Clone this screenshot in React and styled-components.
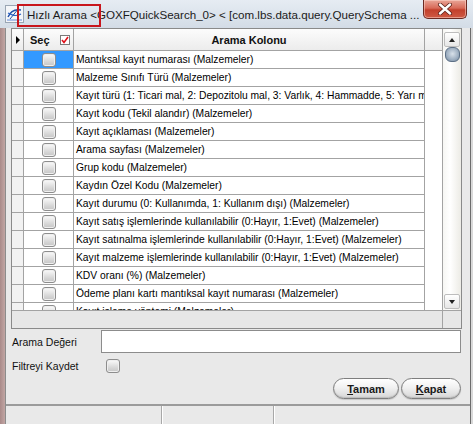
import React from "react"
import styled, { createGlobalStyle } from "styled-components"

const GlobalStyle = createGlobalStyle`
  html, body {
    margin: 0;
    padding: 0;
    background: #e9e9e9;
  }
  * {
    box-sizing: border-box;
  }
`

const Window = styled.div`
  width: 473px;
  height: 424px;
  display: flex;
  flex-direction: column;
  overflow: hidden;
  font-family: "Liberation Sans", Arial, sans-serif;
  color: #111;
`

const TitleBar = styled.div`
  height: 28px;
  flex: none;
  position: relative;
  display: flex;
  align-items: center;
  padding-left: 5px;
  background: linear-gradient(#e6ecf3, #d3dce6);
`

const TitleText = styled.div`
  margin-left: 3px;
  font-size: 11.6px;
  white-space: nowrap;
  color: #1b1b1b;
`

const Annotation = styled.div`
  position: absolute;
  left: 17px;
  top: 4px;
  width: 84px;
  height: 23px;
  border: 2px solid #c8161d;
`

const CloseButton = styled.div`
  position: absolute;
  right: 6px;
  top: 0;
  width: 44px;
  height: 19px;
  display: flex;
  align-items: center;
  justify-content: center;
  border: 1px solid #6b2a22;
  border-top: none;
  border-radius: 0 0 5px 5px;
  background: linear-gradient(#e9a698 0%, #d86a58 45%, #c2402c 55%, #cf5a44 100%);
  box-shadow: inset 0 0 0 1px rgba(255, 220, 210, 0.5);
`

const Frame = styled.div`
  flex: 1;
  display: flex;
  min-height: 0;
`

const LeftEdge = styled.div`
  width: 6px;
  flex: none;
  background: linear-gradient(90deg, #a98a89, #c2a6a4);
  border-right: 1px solid #8c8c8c;
`

const RightEdge = styled.div`
  width: 3px;
  flex: none;
  background: #d9d9d9;
  border-left: 1px solid #6c6c6c;
`

const Client = styled.div`
  flex: 1;
  display: flex;
  flex-direction: column;
  background: #e9e9e9;
  min-width: 0;
`

const Grid = styled.div`
  margin: 0 8px 0 5px;
  height: 301px;
  flex: none;
  border: 1px solid #8a8a8a;
  display: flex;
  flex-direction: column;
  background: #fff;
`

const GridTop = styled.div`
  height: 281px;
  display: flex;
`

const Columns = styled.div`
  flex: 1;
  display: flex;
  flex-direction: column;
  min-width: 0;
`

const HeaderRow = styled.div`
  height: 22px;
  flex: none;
  display: flex;
  border-bottom: 1px solid #a3a3a3;
  background: linear-gradient(#fcfcfc, #ececec);
`

const Cell = styled.div`
  width: ${p => p.w}px;
  flex: none;
  height: 100%;
  display: flex;
  align-items: center;
  justify-content: ${p => (p.center ? "center" : "flex-start")};
  border-right: ${p => (p.last ? "none" : "1px solid #a3a3a3")};
  overflow: hidden;
  white-space: nowrap;
`

const HeaderLabel = styled.span`
  font-weight: bold;
  font-size: 11px;
  color: #111;
  margin-left: ${p => p.ml || 0}px;
`

const Triangle = styled.div`
  width: 0;
  height: 0;
  margin-left: 4px;
  border-top: 4px solid transparent;
  border-bottom: 4px solid transparent;
  border-left: 4px solid #000;
`

const HeaderCheck = styled.div`
  width: 10px;
  height: 10px;
  margin-left: 10px;
  border: 1px solid #7a7a7a;
  background: #fff;
  display: flex;
  align-items: center;
  justify-content: center;
`

const Rows = styled.div`
  flex: 1;
  overflow: hidden;
`

const Row = styled.div`
  height: 18px;
  width: 413px;
  display: flex;
  border-bottom: 1px solid #a3a3a3;
`

const IndicatorCell = styled(Cell)`
  background: #f2f2f2;
`

const CheckCell = styled(Cell)`
  background: ${p => (p.selected ? "#3399ff" : "#fff")};
`

const TextCell = styled(Cell)`
  padding-left: 2px;
  font-size: 10.3px;
  color: #000;
`

const Checkbox = styled.div`
  width: 14px;
  height: 14px;
  flex: none;
  border: 1px solid #8d8d8d;
  border-radius: 3px;
  background: linear-gradient(#fbfbfb, #d4d4d4 70%, #c6c6c6);
  box-shadow: inset 0 0 0 1px #efefef;
`

const Scrollbar = styled.div`
  width: 19px;
  flex: none;
  border-left: 1px solid #a3a3a3;
  display: flex;
  flex-direction: column;
  align-items: center;
  padding: 3px 0 1px;
  background: linear-gradient(90deg, #f6f6f3, #ffffff 40%, #ecebe5);
`

const ScrollButton = styled.div`
  width: 16px;
  height: 15px;
  flex: none;
  border: 1px solid #bdbdbd;
  border-radius: 2px;
  background: linear-gradient(#ffffff, #e6e6e6);
  display: flex;
  align-items: center;
  justify-content: center;
`

const Arrow = styled.div`
  width: 0;
  height: 0;
  border-left: 3.5px solid transparent;
  border-right: 3.5px solid transparent;
  ${p => (p.down ? "border-top: 4px solid #222;" : "border-bottom: 4px solid #222;")}
`

const Thumb = styled.div`
  width: 15px;
  height: 15px;
  flex: none;
  border-radius: 6px;
  border: 1px solid #5d7086;
  background: radial-gradient(circle at 50% 45%, #d9e1ea, #9eafc1 60%, #6f8399);
`

const Track = styled.div`
  flex: 1;
`

const GridBottom = styled.div`
  height: 18px;
  flex: none;
  display: flex;
  border-top: 1px solid #a3a3a3;
  background: #e7e7e7;
`

const Corner = styled.div`
  width: 19px;
  margin-left: auto;
  border-left: 1px solid #a3a3a3;
`

const FormRow = styled.div`
  display: flex;
  align-items: center;
  height: ${p => p.h}px;
  margin-top: ${p => p.mt}px;
  padding-left: 6px;
  flex: none;
`

const Label = styled.div`
  width: ${p => p.w}px;
  flex: none;
  font-size: 10.5px;
  color: #111;
`

const Input = styled.div`
  width: 360px;
  height: 23px;
  border: 1px solid #8c8c8c;
  background: #fff;
`

const ButtonRow = styled.div`
  height: 21px;
  margin-top: 5px;
  margin-right: 9px;
  display: flex;
  justify-content: flex-end;
  gap: 2px;
  flex: none;
`

const PillButton = styled.div`
  width: ${p => p.w}px;
  height: 21px;
  border: 1px solid #7e7e7e;
  border-radius: 11px;
  background: linear-gradient(#ffffff, #f1f1f1 45%, #d6d6d6);
  box-shadow: inset 0 -1px 1px #bdbdbd, 0 1px 1px rgba(0, 0, 0, 0.15);
  display: flex;
  align-items: center;
  justify-content: center;
  font-size: 11px;
  font-weight: bold;
  color: #1a1a1a;

  u {
    text-decoration: underline;
  }
`

const StatusBar = styled.div`
  margin-top: auto;
  height: 20px;
  flex: none;
  display: flex;
  border-top: 2px solid #9b9b9b;
  background: #e9e9e9;
`

const StatusPanel = styled.div`
  width: ${p => (p.w ? p.w + "px" : "auto")};
  flex: ${p => (p.w ? "none" : "1")};
  border-right: ${p => (p.last ? "none" : "1px solid #a8a8a8")};
  box-shadow: ${p => (p.last ? "none" : "1px 0 0 #ffffff")};
  margin-right: ${p => (p.last ? 0 : 2)}px;
`

const rows = [
  "Mantıksal kayıt numarası (Malzemeler)",
  "Malzeme Sınıfı Türü (Malzemeler)",
  "Kayıt türü (1: Ticari mal, 2: Depozitolu mal, 3: Varlık, 4: Hammadde, 5: Yarı mamul, 6: Mamul)",
  "Kayıt kodu (Tekil alandır) (Malzemeler)",
  "Kayıt açıklaması (Malzemeler)",
  "Arama sayfası (Malzemeler)",
  "Grup kodu (Malzemeler)",
  "Kaydın Özel Kodu (Malzemeler)",
  "Kayıt durumu (0: Kullanımda, 1: Kullanım dışı) (Malzemeler)",
  "Kayıt satış işlemlerinde kullanılabilir (0:Hayır, 1:Evet) (Malzemeler)",
  "Kayıt satınalma işlemlerinde kullanılabilir (0:Hayır, 1:Evet) (Malzemeler)",
  "Kayıt malzeme işlemlerinde kullanılabilir (0:Hayır, 1:Evet) (Malzemeler)",
  "KDV oranı (%) (Malzemeler)",
  "Ödeme planı kartı mantıksal kayıt numarası (Malzemeler)",
  "Kayıt işleme yöntemi (Malzemeler)"
]

const AppIcon = () => (
  <svg width="19" height="18" viewBox="0 0 19 18">
    <rect x="0.5" y="0.5" width="18" height="17" fill="#f4f6f9" stroke="#9aa6b4" />
    <path d="M3 12 C6 5, 11 4, 16 5" stroke="#1f4fa8" strokeWidth="1.4" fill="none" />
    <path d="M3 8 C7 10, 11 12, 16 9" stroke="#2a62c4" strokeWidth="1.2" fill="none" />
    <path d="M5 14 L14 3" stroke="#1f4fa8" strokeWidth="1" fill="none" />
    <path d="M2 15 H17" stroke="#3b6fd0" strokeWidth="0.8" />
  </svg>
)

const CloseGlyph = () => (
  <svg width="16" height="12" viewBox="0 0 16 12">
    <path d="M3 1.5 L13 10.5 M13 1.5 L3 10.5" stroke="#5a2018" strokeWidth="4" strokeLinecap="round" />
    <path d="M3 1.5 L13 10.5 M13 1.5 L3 10.5" stroke="#ffffff" strokeWidth="2.4" strokeLinecap="round" />
  </svg>
)

const RedCheck = () => (
  <svg width="8" height="8" viewBox="0 0 8 8">
    <path d="M1 4 L3 6.5 L7 1" stroke="#e0101a" strokeWidth="1.6" fill="none" />
  </svg>
)

const App = () => {
  return (
    <Window>
      <GlobalStyle />
      <TitleBar>
        <AppIcon />
        <TitleText>Hızlı Arama &lt;GOXFQuickSearch_0&gt; &lt; [com.lbs.data.query.QuerySchema ...</TitleText>
        <Annotation />
        <CloseButton>
          <CloseGlyph />
        </CloseButton>
      </TitleBar>

      <Frame>
        <LeftEdge />
        <Client>
          <Grid>
            <GridTop>
              <Columns>
                <HeaderRow>
                  <Cell w={12}>
                    <Triangle />
                  </Cell>
                  <Cell w={50}>
                    <HeaderLabel ml={6}>Seç</HeaderLabel>
                    <HeaderCheck>
                      <RedCheck />
                    </HeaderCheck>
                  </Cell>
                  <Cell w={351} center>
                    <HeaderLabel>Arama Kolonu</HeaderLabel>
                  </Cell>
                  <Cell w={17} last />
                </HeaderRow>
                <Rows>
                  {rows.map((text, i) => (
                    <Row key={i}>
                      <IndicatorCell w={12} />
                      <CheckCell w={50} center selected={i === 0}>
                        <Checkbox />
                      </CheckCell>
                      <TextCell w={351}>{text}</TextCell>
                    </Row>
                  ))}
                </Rows>
              </Columns>
              <Scrollbar>
                <ScrollButton>
                  <Arrow />
                </ScrollButton>
                <Thumb />
                <Track />
                <ScrollButton>
                  <Arrow down />
                </ScrollButton>
              </Scrollbar>
            </GridTop>
            <GridBottom>
              <Corner />
            </GridBottom>
          </Grid>

          <FormRow h={23} mt={1}>
            <Label w={89}>Arama Değeri</Label>
            <Input />
          </FormRow>
          <FormRow h={14} mt={6}>
            <Label w={94}>Filtreyi Kaydet</Label>
            <Checkbox />
          </FormRow>

          <ButtonRow>
            <PillButton w={66}>
              <span>
                <u>T</u>amam
              </span>
            </PillButton>
            <PillButton w={60}>
              <span>
                <u>K</u>apat
              </span>
            </PillButton>
          </ButtonRow>

          <StatusBar>
            <StatusPanel w={156} />
            <StatusPanel w={110} />
            <StatusPanel last />
          </StatusBar>
        </Client>
        <RightEdge />
      </Frame>
    </Window>
  )
}

export default App
